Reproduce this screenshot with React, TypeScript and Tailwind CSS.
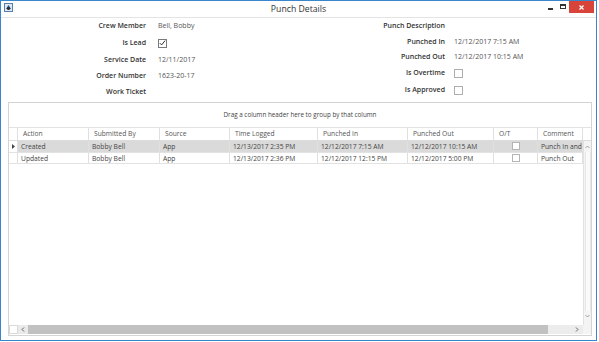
import React from 'react';

const cols = [
  { key: 'ind', label: '', w: 'w-[9px]' },
  { key: 'action', label: 'Action', w: 'w-[71px]' },
  { key: 'by', label: 'Submitted By', w: 'w-[71px]' },
  { key: 'source', label: 'Source', w: 'w-[70px]' },
  { key: 'logged', label: 'Time Logged', w: 'w-[88px]' },
  { key: 'in', label: 'Punched In', w: 'w-[90px]' },
  { key: 'out', label: 'Punched Out', w: 'w-[86px]' },
  { key: 'ot', label: 'O/T', w: 'w-[44px]' },
  { key: 'comment', label: 'Comment', w: 'w-[45px]' },
];

const rows = [
  { action: 'Created', by: 'Bobby Bell', source: 'App', logged: '12/13/2017 2:35 PM', in: '12/12/2017 7:15 AM', out: '12/12/2017 10:15 AM', comment: 'Punch In and', selected: true },
  { action: 'Updated', by: 'Bobby Bell', source: 'App', logged: '12/13/2017 2:36 PM', in: '12/12/2017 12:15 PM', out: '12/12/2017 5:00 PM', comment: 'Punch Out', selected: false },
];

function CheckBox({ checked }: { checked?: boolean }) {
  return (
    <div className={`w-[9px] h-[9px] border ${checked ? 'border-[#7a7a7a]' : 'border-[#adadad]'} bg-white flex items-center justify-center`}>
      {checked && (
        <svg width="8" height="8" viewBox="0 0 8 8">
          <path d="M1 4.2 L3 6.2 L7 1.2" fill="none" stroke="#222" strokeWidth="1.1" />
        </svg>
      )}
    </div>
  );
}

function Field({ label, h, labelW, gap, children }: { label: string; h: string; labelW: string; gap: string; children?: React.ReactNode }) {
  return (
    <div className={`flex items-center ${h}`}>
      <div className={`${labelW} text-right font-semibold text-[#333]`}>{label}</div>
      <div className={`${gap} text-[#555] flex items-center`}>{children}</div>
    </div>
  );
}

export default function App() {
  return (
    <div className="w-[599px] h-[342px] bg-white font-['Open_Sans',sans-serif] overflow-hidden">
      <div className="w-[597px] h-[341px] border border-[#3a86cc] flex flex-col bg-white">
        {/* title bar */}
        <div className="h-[17px] flex items-start relative border-b border-[#e4e4e4]">
          <div className="w-[52px] pl-[3px] pt-[2px]">
            <svg width="9" height="9" viewBox="0 0 9 9">
              <rect x="0.5" y="0.5" width="8" height="8" fill="#dfe8f2" stroke="#5a7fa8" />
              <path d="M2 6 L4.5 2 L7 6 Z" fill="#1e4f86" />
              <circle cx="4.5" cy="5.5" r="1.6" fill="#2c2c2c" />
            </svg>
          </div>
          <div className="flex-1 text-center text-[8.7px] leading-[17px] text-[#333]">Punch Details</div>
          <div className="w-[52px] flex items-start justify-end h-[12px]">
            <div className="w-[13px] h-[12px] flex items-center justify-center">
              <div className="w-[5px] h-[1.5px] bg-[#333] mt-[4px]" />
            </div>
            <div className="w-[13px] h-[12px] flex items-center justify-center">
              <div className="w-[6px] h-[5px] border border-[#333] border-t-2 mb-[1px]" />
            </div>
            <div className="w-[26px] h-[12px] bg-[#d9443a] flex items-center justify-center mr-[2px]">
              <svg width="5" height="5" viewBox="0 0 5 5">
                <path d="M0.5 0.5 L4.5 4.5 M4.5 0.5 L0.5 4.5" stroke="#fff" strokeWidth="1.2" />
              </svg>
            </div>
          </div>
        </div>

        {/* content */}
        <div className="flex-1 flex flex-col px-[6px] text-[7px]">
          <div className="flex">
            <div className="w-[294px] flex flex-col">
              <Field label="Crew Member" h="h-[16px]" labelW="w-[139px]" gap="pl-[12px]">Bell, Bobby</Field>
              <Field label="Is Lead" h="h-[18px]" labelW="w-[139px]" gap="pl-[12px]"><CheckBox checked /></Field>
              <Field label="Service Date" h="h-[17px]" labelW="w-[139px]" gap="pl-[12px]">12/11/2017</Field>
              <Field label="Order Number" h="h-[15px]" labelW="w-[139px]" gap="pl-[12px]">1623-20-17</Field>
              <Field label="Work Ticket" h="h-[16px]" labelW="w-[139px]" gap="pl-[12px]" />
            </div>
            <div className="flex flex-col">
              <Field label="Punch Description" h="h-[17px]" labelW="w-[144px]" gap="pl-[9px]" />
              <Field label="Punched In" h="h-[15px]" labelW="w-[144px]" gap="pl-[9px]">12/12/2017 7:15 AM</Field>
              <Field label="Punched Out" h="h-[15px]" labelW="w-[144px]" gap="pl-[9px]">12/12/2017 10:15 AM</Field>
              <Field label="Is Overtime" h="h-[17px]" labelW="w-[144px]" gap="pl-[9px]"><CheckBox /></Field>
              <Field label="Is Approved" h="h-[16px]" labelW="w-[144px]" gap="pl-[9px]"><CheckBox /></Field>
            </div>
          </div>

          {/* grid */}
          <div className="mt-[2px] ml-[1px] w-[584px] h-[234px] border border-[#d4d4d4] flex flex-col">
            <div className="h-[25px] flex items-center justify-center border-b border-[#e2e2e2] text-[6.3px] text-[#444]">
              Drag a column header here to group by that column
            </div>
            <div className="flex h-[13px] border-b border-[#dcdcdc]">
              {cols.map((c) => (
                <div key={c.key} className={`${c.w} shrink-0 border-r border-[#e0e0e0] pl-[5px] text-[6.7px] leading-[12px] text-[#555] whitespace-nowrap overflow-hidden`}>
                  {c.label}
                </div>
              ))}
              <div className="flex-1" />
            </div>
            <div className="flex flex-1 min-h-0">
              <div className="w-[574px] flex flex-col">
                {rows.map((r, i) => (
                  <div key={i} className={`flex h-[11.5px] border-b border-[#e2e2e2] ${r.selected ? 'bg-[#dadada]' : 'bg-white'}`}>
                    <div className="w-[9px] shrink-0 border-r border-[#e0e0e0] bg-white flex items-center justify-center">
                      {r.selected && (
                        <svg width="3" height="5" viewBox="0 0 3 5"><path d="M0 0 L3 2.5 L0 5 Z" fill="#444" /></svg>
                      )}
                    </div>
                    {[
                      [r.action, 'w-[71px]'],
                      [r.by, 'w-[71px]'],
                      [r.source, 'w-[70px]'],
                      [r.logged, 'w-[88px]'],
                      [r.in, 'w-[90px]'],
                      [r.out, 'w-[86px]'],
                    ].map(([t, w], j) => (
                      <div key={j} className={`${w} shrink-0 border-r border-[#e0e0e0] pl-[3px] text-[6.7px] leading-[11px] text-[#444] whitespace-nowrap overflow-hidden`}>
                        {t}
                      </div>
                    ))}
                    <div className="w-[44px] shrink-0 border-r border-[#e0e0e0] flex items-center justify-center">
                      <div className="w-[8px] h-[8px] border border-[#b4b4b4] bg-white" />
                    </div>
                    <div className="w-[45px] shrink-0 border-r border-[#e0e0e0] pl-[3px] text-[6.7px] leading-[11px] text-[#444] whitespace-nowrap overflow-hidden">
                      {r.comment}
                    </div>
                  </div>
                ))}
              </div>
              {/* vertical scrollbar */}
              <div className="w-[8px] flex flex-col items-center bg-[#f4f4f4] border-l border-[#e2e2e2] pb-[6px]">
                <svg width="5" height="6" viewBox="0 0 5 6" className="mt-[3px]"><path d="M0.5 4 L2.5 2 L4.5 4" fill="none" stroke="#9a9a9a" strokeWidth="0.9" /></svg>
                <div className="flex-1 w-[6px] my-[2px] bg-[#fafafa] border-x border-[#e6e6e6]" />
                <svg width="5" height="6" viewBox="0 0 5 6"><path d="M0.5 2 L2.5 4 L4.5 2" fill="none" stroke="#9a9a9a" strokeWidth="0.9" /></svg>
              </div>
            </div>
            {/* horizontal scrollbar */}
            <div className="h-[9px] flex mb-[1px]">
              <div className="w-[9px] border border-[#dadada] bg-white" />
              <div className="w-[10px] flex items-center justify-center bg-[#eaeaea]">
                <svg width="4" height="5" viewBox="0 0 4 5"><path d="M3 0.5 L1 2.5 L3 4.5" fill="none" stroke="#555" strokeWidth="0.9" /></svg>
              </div>
              <div className="w-[520px] bg-[#c1c1c1]" />
              <div className="flex-1 bg-[#ececec] flex items-center justify-end pr-[4px]">
                <svg width="4" height="5" viewBox="0 0 4 5"><path d="M1 0.5 L3 2.5 L1 4.5" fill="none" stroke="#555" strokeWidth="0.9" /></svg>
              </div>
              <div className="w-[8px] bg-[#f4f4f4]" />
            </div>
          </div>
        </div>
      </div>
    </div>
  );
}
